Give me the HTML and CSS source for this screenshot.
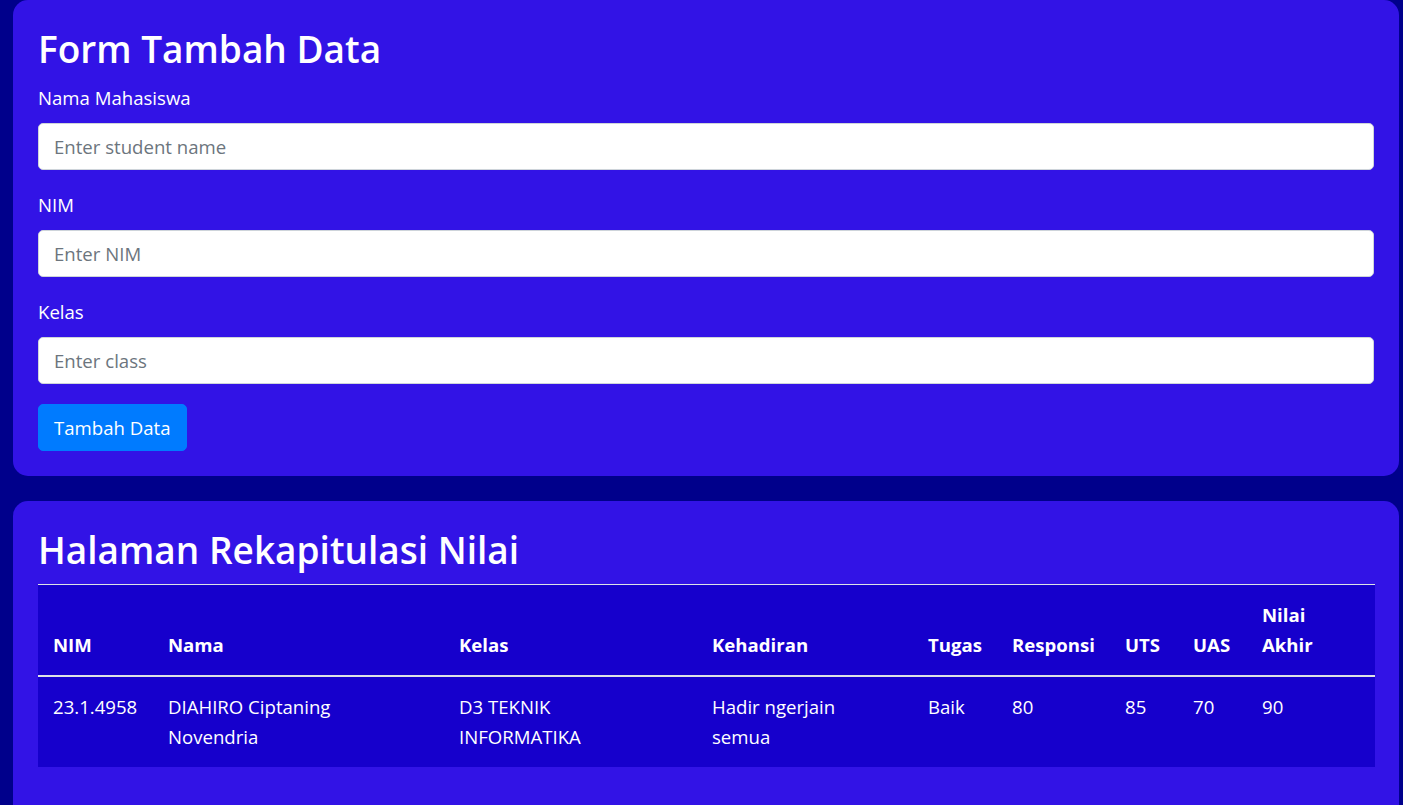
FILE: index.html
```html
<!DOCTYPE html>
<html lang="id">
<head>
<meta charset="utf-8">
<title>Rekapitulasi Nilai</title>
<link rel="stylesheet" href="styles.css">
</head>
<body>
<div class="page">
  <section class="card">
    <h1 class="title">Form Tambah Data</h1>
    <form class="form">
      <div class="group">
        <label class="label" for="nama">Nama Mahasiswa</label>
        <input class="input" id="nama" type="text" placeholder="Enter student name">
      </div>
      <div class="group">
        <label class="label" for="nim">NIM</label>
        <input class="input" id="nim" type="text" placeholder="Enter NIM">
      </div>
      <div class="group">
        <label class="label" for="kelas">Kelas</label>
        <input class="input" id="kelas" type="text" placeholder="Enter class">
      </div>
      <button class="btn" type="button">Tambah Data</button>
    </form>
  </section>
  <section class="card card-table">
    <h1 class="title">Halaman Rekapitulasi Nilai</h1>
    <table class="table">
      <colgroup>
        <col class="c-nim"><col class="c-nama"><col class="c-kelas"><col class="c-hadir"><col class="c-tugas"><col class="c-resp"><col class="c-uts"><col class="c-uas"><col class="c-akhir">
      </colgroup>
      <thead>
        <tr>
          <th>NIM</th><th>Nama</th><th>Kelas</th><th>Kehadiran</th><th>Tugas</th><th>Responsi</th><th>UTS</th><th>UAS</th><th>Nilai Akhir</th>
        </tr>
      </thead>
      <tbody>
        <tr>
          <td>23.1.4958</td><td>DIAHIRO Ciptaning<br>Novendria</td><td>D3 TEKNIK<br>INFORMATIKA</td><td>Hadir ngerjain semua</td><td>Baik</td><td>80</td><td>85</td><td>70</td><td>90</td>
        </tr>
      </tbody>
    </table>
  </section>
</div>
</body>
</html>
```

FILE: styles.css
```css
* { box-sizing: border-box; }
html, body { margin: 0; padding: 0; }
body {
  background: #00008b;
  font-family: "Open Sans", "Noto Sans", sans-serif;
  font-size: 18.6px;
  line-height: 30px;
  color: #fff;
}
.page {
  padding: 0 4px 0 13px;
}
.card {
  background: #3213e6;
  border-radius: 15px;
  padding: 25px 25px 25px;
  margin-bottom: 25px;
}
.card-table {
  margin-bottom: 0;
  padding-bottom: 60px;
}
.title {
  margin: 0 0 10px;
  font-size: 37px;
  line-height: 48px;
  font-weight: 600;
  color: #fff;
}
.form { margin: 0; }
.group { margin-bottom: 20px; }
.label {
  display: block;
  margin-bottom: 10px;
  line-height: 30px;
}
.input {
  display: block;
  width: 100%;
  height: 47px;
  padding: 7px 15px;
  font: inherit;
  color: #495057;
  background: #fff;
  border: 1px solid #ced4da;
  border-radius: 5px;
}
.input::placeholder { color: #6c757d; opacity: 1; }
.btn {
  display: inline-block;
  height: 47px;
  padding: 7px 15px;
  font: inherit;
  color: #fff;
  background: #007bff;
  border: 1px solid #007bff;
  border-radius: 5px;
}
.table {
  width: 100%;
  table-layout: fixed;
  border-collapse: collapse;
  background: #1600cc;
  color: #fff;
}
.table th, .table td {
  padding: 15px;
  text-align: left;
  border-top: 1px solid #dee2e6;
}
.table th {
  vertical-align: bottom;
  font-weight: 700;
  border-bottom: 2px solid #dee2e6;
}
.table td { vertical-align: top; }
.c-nim { width: 115px; }
.c-nama { width: 291px; }
.c-kelas { width: 253px; }
.c-hadir { width: 216px; }
.c-tugas { width: 84px; }
.c-resp { width: 113px; }
.c-uts { width: 68px; }
.c-uas { width: 69px; }
.c-akhir { width: 128px; }
```
